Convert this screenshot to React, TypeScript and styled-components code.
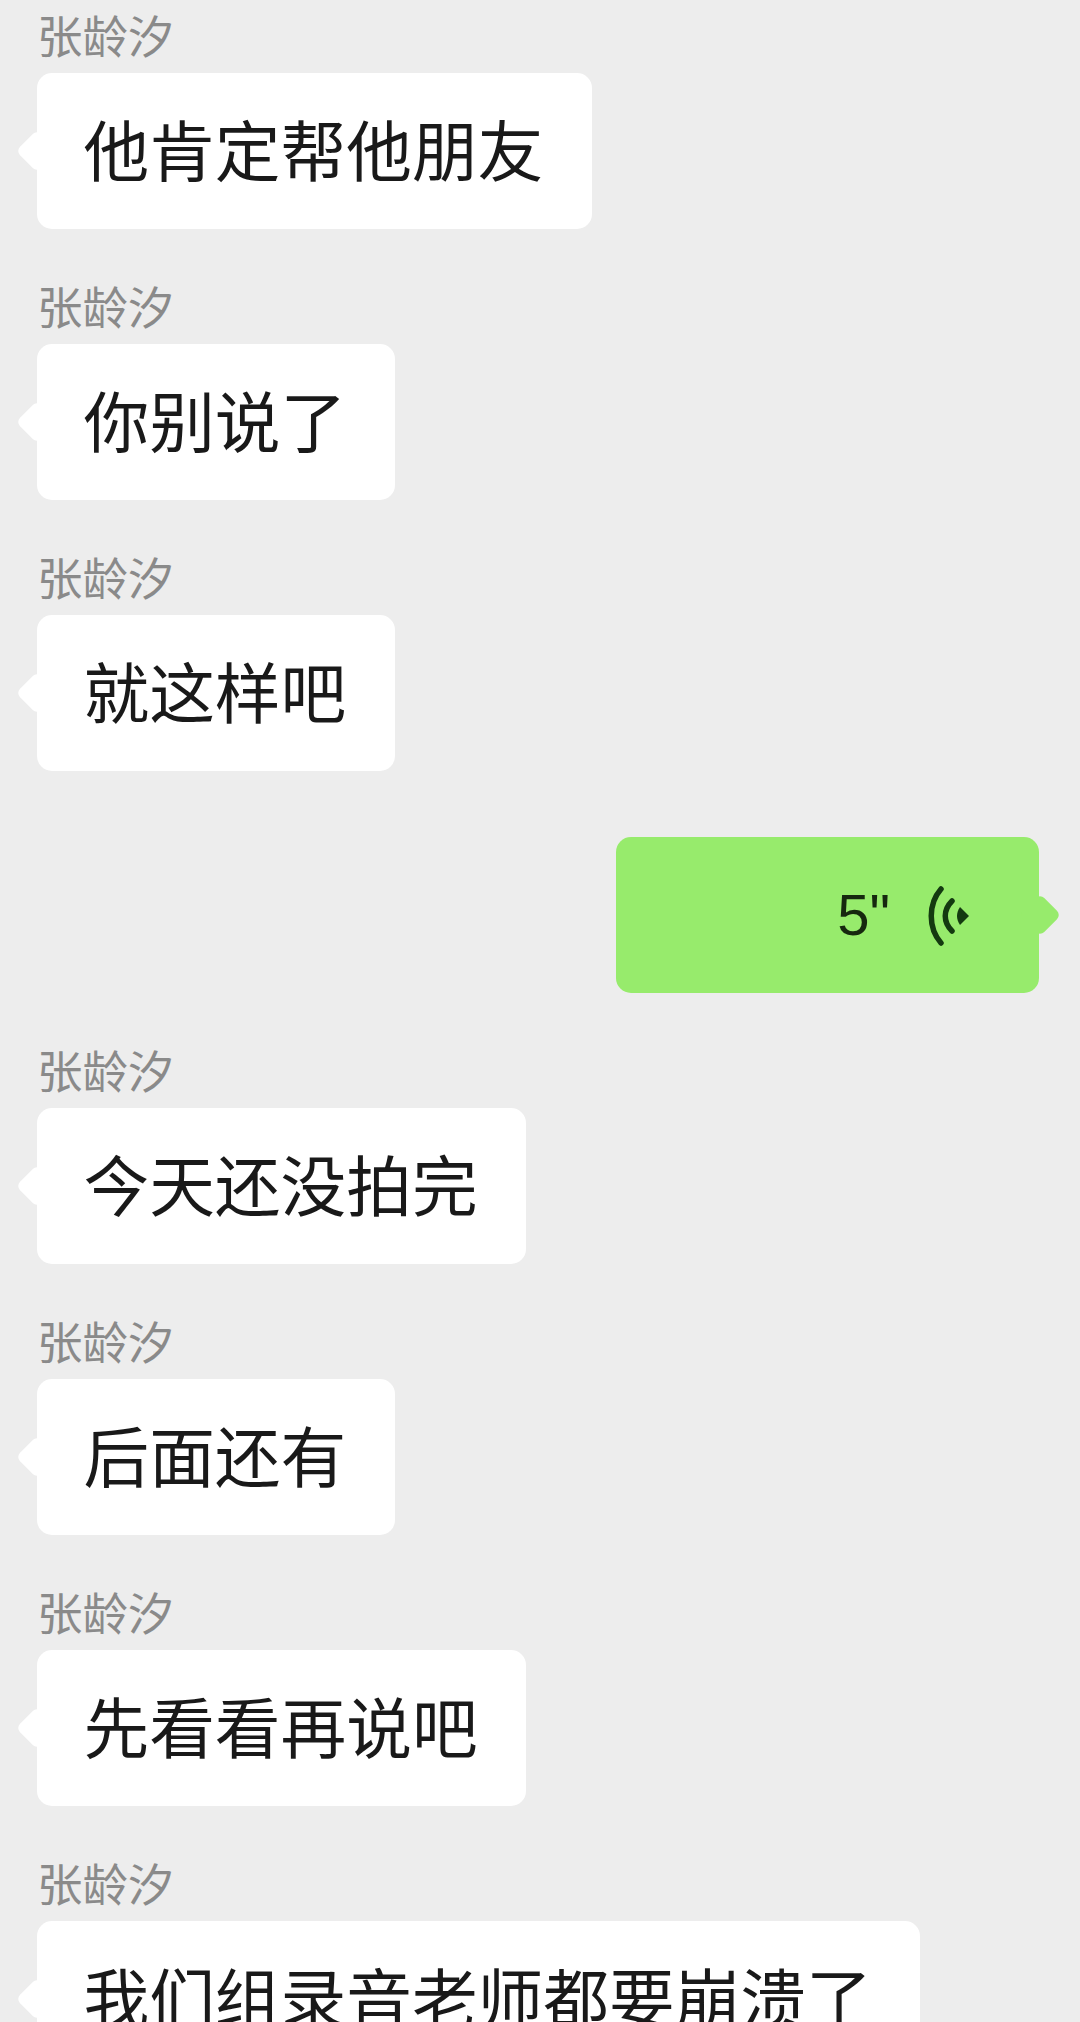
import styled, { createGlobalStyle } from 'styled-components';

const GlobalStyle = createGlobalStyle`
  html, body {
    margin: 0;
    padding: 0;
    height: 2022px;
    overflow: hidden;
    background: #ededed;
  }
`;

const ChatList = styled.div`
  display: flex;
  flex-direction: column;
  gap: 53.2px;
  padding: 11px 41px 0 37px;
  font-family: "Noto Sans CJK SC", "Noto Sans", sans-serif;
`;

const IncomingRow = styled.div`
  display: flex;
  flex-direction: column;
  align-items: flex-start;
`;

const OutgoingRow = styled.div`
  display: flex;
  justify-content: flex-end;
  margin-top: 12px;
`;

const SenderName = styled.div`
  font-size: 45.5px;
  line-height: 50px;
  margin-top: -2px;
  margin-bottom: 14px;
  color: #8a8a8a;
`;

const Bubble = styled.div`
  position: relative;
  height: 156px;
  box-sizing: border-box;
  padding: 0 48.5px 7px 46.5px;
  display: flex;
  align-items: center;
  border-radius: 15px;
  background: #ffffff;
  color: #191919;
  font-size: 65.7px;
  white-space: nowrap;

  &::before {
    content: '';
    position: absolute;
    left: -15px;
    top: 50%;
    width: 30px;
    height: 30px;
    border-radius: 6px;
    background: inherit;
    transform: translateY(-50%) rotate(45deg);
  }
`;

const VoiceBubble = styled(Bubble)`
  width: 423px;
  padding: 0 70px 0 0;
  justify-content: flex-end;
  gap: 38px;
  background: #97eb6c;

  &::before {
    left: auto;
    right: -16px;
  }
`;

const Duration = styled.span`
  font-family: "Liberation Sans", Arial, sans-serif;
  font-size: 58px;
  color: #16280f;
`;

const VoiceIcon = styled.svg`
  margin-top: 3px;
`;

const VoiceGlyph = () => (
  <VoiceIcon width="41" height="60" viewBox="0 0 41 60" fill="none">
    <path d="M13 3C0 18 0 42 13 57" stroke="#143a10" strokeWidth="5.5" strokeLinecap="round" />
    <path d="M24 15C15 24 15 36 24 45" stroke="#143a10" strokeWidth="5.5" strokeLinecap="round" />
    <path d="M32 21L41 30L32 39C28 33 28 27 32 21Z" fill="#143a10" />
  </VoiceIcon>
);

const incomingBefore = ['他肯定帮他朋友', '你别说了', '就这样吧'];
const incomingAfter = ['今天还没拍完', '后面还有', '先看看再说吧', '我们组录音老师都要崩溃了'];

const IncomingMessage = ({ text }: { text: string }) => (
  <IncomingRow>
    <SenderName>张龄汐</SenderName>
    <Bubble>{text}</Bubble>
  </IncomingRow>
);

export default function App() {
  return (
    <>
      <GlobalStyle />
      <ChatList>
        {incomingBefore.map((text) => (
          <IncomingMessage key={text} text={text} />
        ))}
        <OutgoingRow>
          <VoiceBubble>
            <Duration>5"</Duration>
            <VoiceGlyph />
          </VoiceBubble>
        </OutgoingRow>
        {incomingAfter.map((text) => (
          <IncomingMessage key={text} text={text} />
        ))}
      </ChatList>
    </>
  );
}
